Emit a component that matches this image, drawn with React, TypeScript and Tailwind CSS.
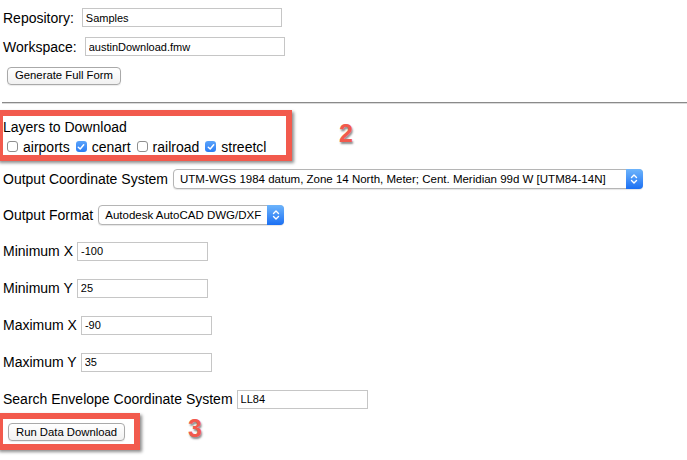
import React from 'react';

function TextBox({ value, className }: { value: string; className: string }) {
  return (
    <input
      readOnly
      value={value}
      className={`h-[19px] border border-[#c6c6c6] bg-white pl-[3px] text-[11px] text-black outline-none ${className}`}
    />
  );
}

function MacButton({ children }: { children: React.ReactNode }) {
  return (
    <button className="h-[18px] px-[7px] rounded-[4px] border border-[#a9a9a9] bg-linear-to-b from-white to-[#f1f1f1] text-[11.3px] leading-none text-black shadow-[0_1px_1px_rgba(0,0,0,0.08)]">
      {children}
    </button>
  );
}

function Chevrons() {
  return (
    <svg width="8" height="12" viewBox="0 0 8 12" fill="none" stroke="white" strokeWidth="1.4" strokeLinecap="round" strokeLinejoin="round">
      <path d="M1.5 4.5 L4 2 L6.5 4.5" />
      <path d="M1.5 7.5 L4 10 L6.5 7.5" />
    </svg>
  );
}

function MacSelect({ value, className }: { value: string; className: string }) {
  return (
    <div className={`flex h-[20px] items-stretch rounded-[4px] border border-[#b5b5b5] bg-white shadow-[0_1px_1px_rgba(0,0,0,0.1)] ${className}`}>
      <div className="flex-1 truncate pl-[6px] text-[11.5px] leading-[18px] text-black">{value}</div>
      <div className="-my-px -mr-px flex w-[17px] items-center justify-center rounded-r-[4px] bg-linear-to-b from-[#6db4fb] to-[#1a6ff3]">
        <Chevrons />
      </div>
    </div>
  );
}

function Check({ checked }: { checked: boolean }) {
  if (!checked) {
    return <span className="inline-block h-[11px] w-[11px] rounded-[3px] border border-[#8f8f8f] bg-white" />;
  }
  return (
    <span className="flex h-[11px] w-[11px] items-center justify-center rounded-[3px] bg-linear-to-b from-[#5aa3fa] to-[#2a7cf4]">
      <svg width="8" height="8" viewBox="0 0 8 8" fill="none" stroke="white" strokeWidth="1.5" strokeLinecap="round" strokeLinejoin="round">
        <path d="M1.3 4.2 L3.2 6 L6.7 1.8" />
      </svg>
    </span>
  );
}

const layers = [
  { name: 'airports', on: false },
  { name: 'cenart', on: true },
  { name: 'railroad', on: false },
  { name: 'streetcl', on: true },
];

export default function App() {
  return (
    <div className="relative h-[460px] w-[687px] overflow-hidden bg-white font-['Liberation_Sans',Arial,sans-serif] text-[14px] leading-[16px] text-black">
      <div className="flex flex-col pt-[8px]">
        <div className="flex items-center gap-[8px] pl-[3px]">
          <span>Repository:</span>
          <TextBox value="Samples" className="w-[200px]" />
        </div>
        <div className="mt-[10px] flex items-center gap-[8px] pl-[3px]">
          <span>Workspace:</span>
          <TextBox value="austinDownload.fmw" className="w-[200px]" />
        </div>
        <div className="mt-[10px] pl-[7px]">
          <MacButton>Generate Full Form</MacButton>
        </div>

        <div className="ml-[2px] mt-[17px] h-[2px] border-t border-b border-t-[#8a8a8a] border-b-[#dadada]" />

        <div className="mt-[15px] pl-[3px]">Layers to Download</div>
        <div className="mt-[4px] flex items-center pl-[7px]">
          {layers.map((l) => (
            <div key={l.name} className="mr-[6px] flex items-center gap-[5px]">
              <Check checked={l.on} />
              <span>{l.name}</span>
            </div>
          ))}
        </div>

        <div className="mt-[14px] flex items-center gap-[5px] pl-[3px]">
          <span>Output Coordinate System</span>
          <MacSelect value="UTM-WGS 1984 datum, Zone 14 North, Meter; Cent. Meridian 99d W [UTM84-14N]" className="w-[470px]" />
        </div>
        <div className="mt-[16px] flex items-center gap-[5px] pl-[3px]">
          <span>Output Format</span>
          <MacSelect value="Autodesk AutoCAD DWG/DXF" className="w-[186px]" />
        </div>

        <div className="mt-[17px] flex items-center gap-[4px] pl-[3px]">
          <span>Minimum X</span>
          <TextBox value="-100" className="w-[131px]" />
        </div>
        <div className="mt-[18px] flex items-center gap-[4px] pl-[3px]">
          <span>Minimum Y</span>
          <TextBox value="25" className="w-[131px]" />
        </div>
        <div className="mt-[18px] flex items-center gap-[4px] pl-[3px]">
          <span>Maximum X</span>
          <TextBox value="-90" className="w-[131px]" />
        </div>
        <div className="mt-[18px] flex items-center gap-[4px] pl-[3px]">
          <span>Maximum Y</span>
          <TextBox value="35" className="w-[131px]" />
        </div>

        <div className="mt-[18px] flex items-center gap-[4px] pl-[3px]">
          <span>Search Envelope Coordinate System</span>
          <TextBox value="LL84" className="w-[131px]" />
        </div>
        <div className="mt-[14px] pl-[8px]">
          <MacButton>Run Data Download</MacButton>
        </div>
      </div>

      {/* annotation overlays */}
      <div className="pointer-events-none absolute left-[-3px] top-[110px] h-[51px] w-[295px] border-[6px] border-[#f25a4d] shadow-[2px_2px_3px_rgba(0,0,0,0.45)]" />
      <div className="pointer-events-none absolute left-[339px] top-[119px] text-[25px] font-bold leading-[28px] text-[#f25a4d] [text-shadow:1px_2px_2px_rgba(0,0,0,0.45)]">
        2
      </div>
      <div className="pointer-events-none absolute left-[-3px] top-[413px] h-[37px] w-[143px] border-[6px] border-[#f25a4d] shadow-[2px_2px_3px_rgba(0,0,0,0.45)]" />
      <div className="pointer-events-none absolute left-[188px] top-[414px] text-[25px] font-bold leading-[28px] text-[#f25a4d] [text-shadow:1px_2px_2px_rgba(0,0,0,0.45)]">
        3
      </div>
    </div>
  );
}
